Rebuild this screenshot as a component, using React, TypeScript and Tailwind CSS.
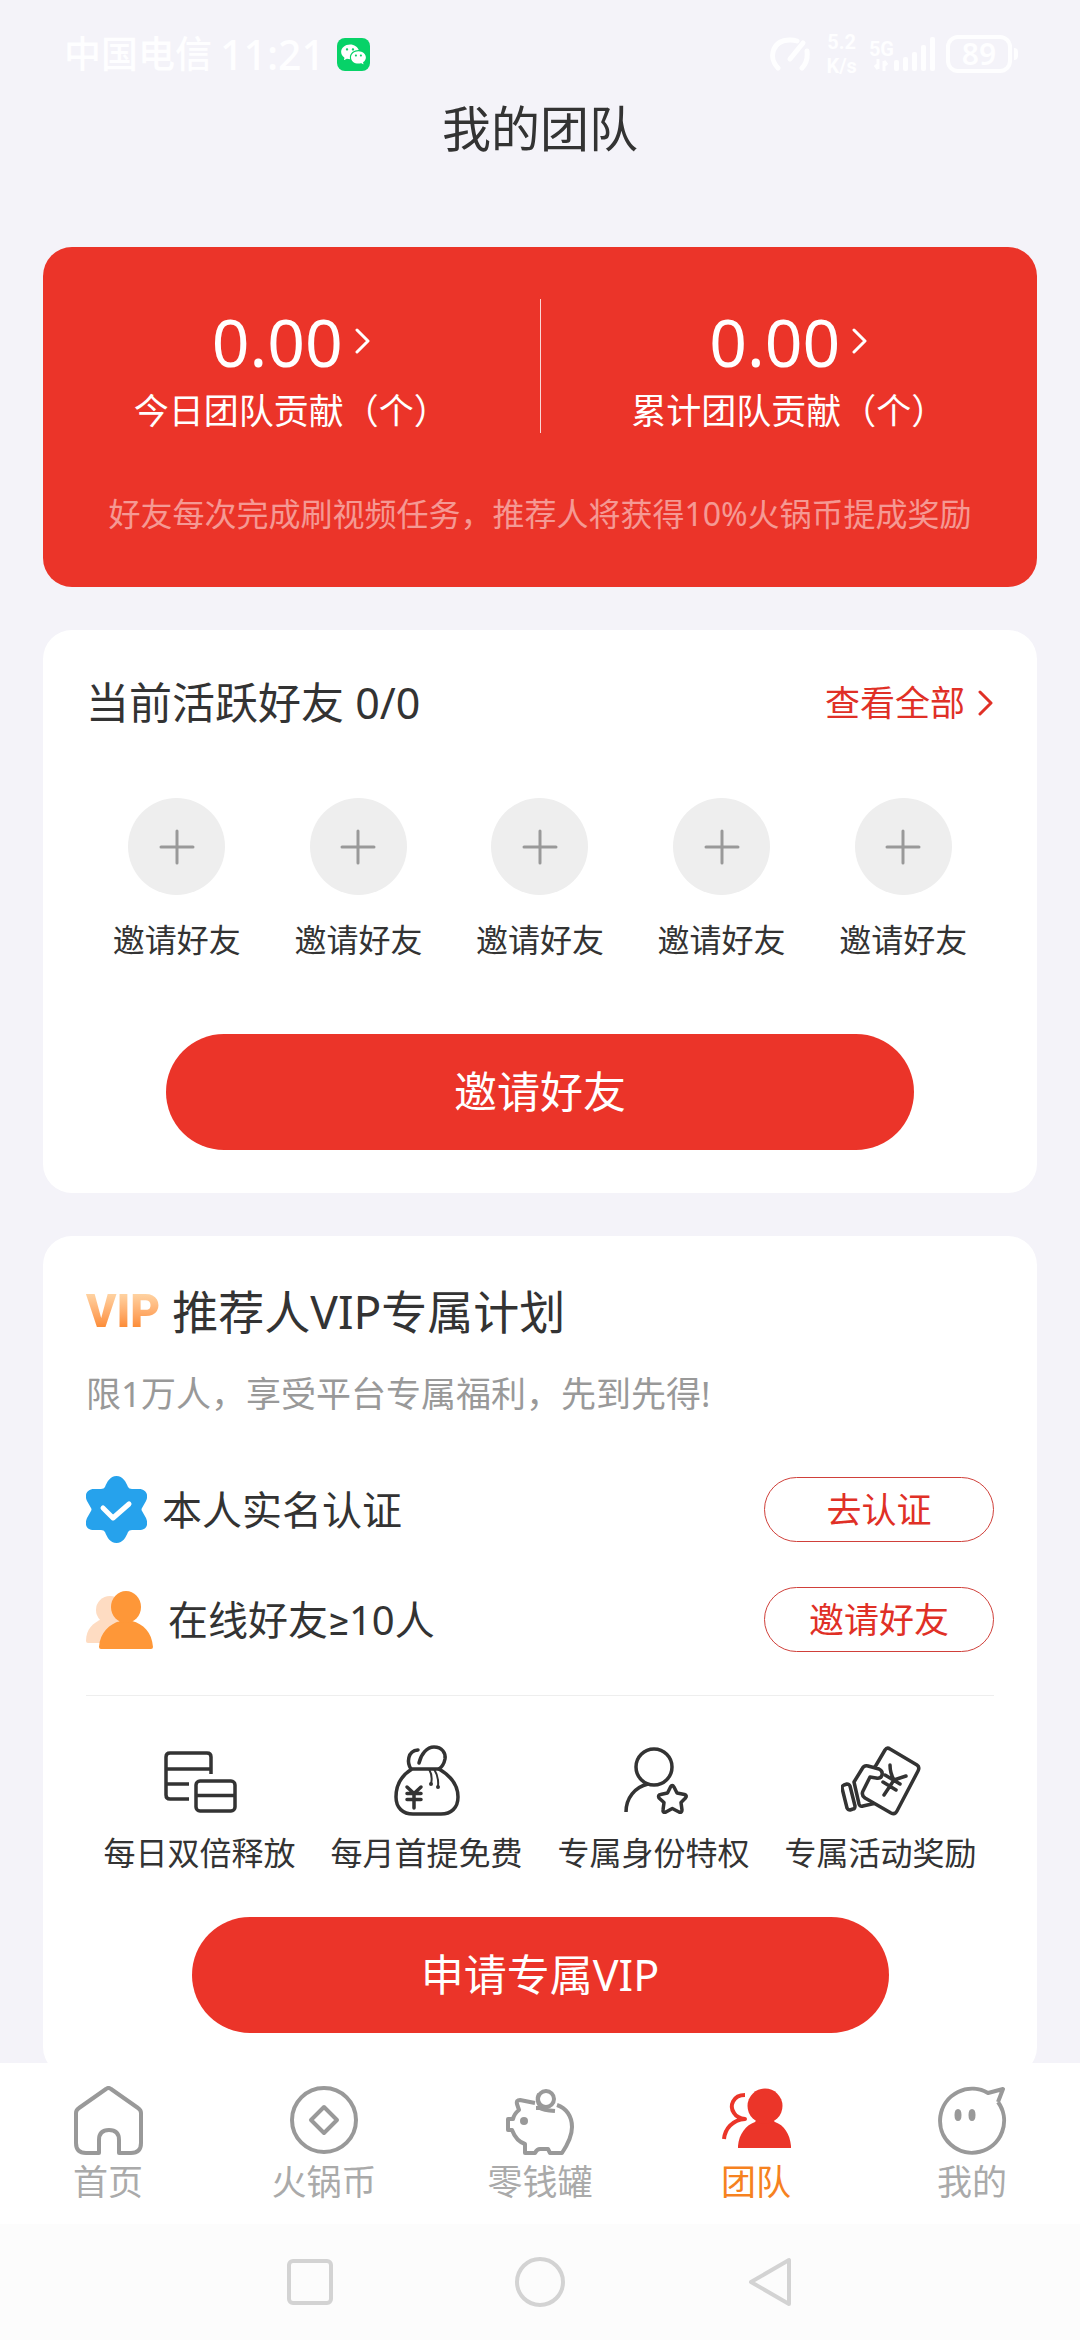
import { ReactNode, useState } from 'react';
import { RiWechatFill } from 'react-icons/ri';

const FONT = "font-['Noto_Sans',Roboto,'Noto_Sans_CJK_SC',sans-serif]";

function Chevron({ className }: { className?: string }) {
    return (
        <svg viewBox="0 0 16 26" className={className} fill="none" stroke="currentColor" strokeWidth="3" strokeLinecap="round" strokeLinejoin="round">
            <path d="M2 2L13 13L2 24" />
        </svg>
    );
}

function StatusBar() {
    return (
        <div className="flex h-[108px] items-center justify-between pr-[62px] pl-16 text-[#fefeff]">
            <div className="flex items-center">
                <span className="text-[37px] leading-[44px] font-medium">中国电信</span>
                <span className="ml-2 text-[41px] leading-[44px] font-medium">11:21</span>
                <span className="ml-3 flex size-[33px] items-center justify-center rounded-lg bg-[#07d268] text-white">
                    <RiWechatFill className="size-[27px]" />
                </span>
            </div>
            <div className="flex items-center">
                <svg viewBox="0 0 40 36" className="h-9 w-10" fill="none" stroke="currentColor" strokeWidth="5" strokeLinecap="round">
                    <path d="M8 32C-2 22 2 4 20 4Q24 4 27 5" />
                    <path d="M37 15C38 23 36 28 32 32" />
                    <path d="M33 7L20 23" />
                </svg>
                <div className="ml-4 flex flex-col text-center font-[Roboto,sans-serif] text-[20px] leading-6 font-bold">
                    <span>5.2</span>
                    <span>K/s</span>
                </div>
                <div className="ml-3 flex items-end">
                    <div className="flex flex-col items-center">
                        <span className="font-[Roboto,sans-serif] text-[20px] leading-5 font-bold">5G</span>
                        <svg viewBox="0 0 14 12" className="h-3 w-3.5" fill="none" stroke="currentColor" strokeWidth="3">
                            <path d="M4 0V10M1 6L4 10M10 12V2M13 6L10 2" />
                        </svg>
                    </div>
                    <svg viewBox="0 0 44 34" className="h-[34px] w-11" fill="currentColor">
                        <rect x="0" y="23" width="5" height="11" rx="2" />
                        <rect x="9" y="20" width="5" height="14" rx="2" />
                        <rect x="18" y="15" width="5" height="19" rx="2" />
                        <rect x="27" y="8" width="5" height="26" rx="2" />
                        <rect x="36" y="0" width="5" height="34" rx="2" />
                    </svg>
                </div>
                <div className="ml-2 flex h-[38px] w-[66px] items-center justify-center rounded-xl border-4 border-current text-[30px] leading-none font-semibold">89</div>
                <div className="ml-0.5 h-3 w-1 rounded-r bg-current" />
            </div>
        </div>
    );
}

function VerifiedIcon() {
    return (
        <svg viewBox="0 0 61 67" className="h-[67px] w-[61px] shrink-0">
            <path
                fill="#26a2ec"
                d="M30.5 0C37 0 40 6 42 11Q43 13 46 13L53 13C60 13 63 19 60 25L56 32Q55 33.500 56 35L60 42C63 49 60 54 53 54L46 54Q43 54 42 56C40 61 37 67 30.500 67C24 67 21 61 19 56Q18 54 15 54L8 54C1 54 -2 49 1 42L5 35Q6 33.500 5 32L1 25C-2 19 1 13 8 13L15 13Q18 13 19 11C21 6 24 0 30.500 0Z"
            />
            <path d="M17 32L27 42L43 28" fill="none" stroke="#fff" strokeWidth="5" strokeLinecap="round" strokeLinejoin="round" />
        </svg>
    );
}

function FriendsIcon() {
    return (
        <svg viewBox="0 0 67 58" className="h-[58px] w-[67px] shrink-0">
            <g fill="#fedcc2">
                <circle cx="24" cy="19" r="14" />
                <path d="M0 50C0 38 7 32 16 28H32V52H2Q0 52 0 50Z" />
            </g>
            <path d="M13 56C14 41 24 33 34 30V26H46V30C57 33 66 41 67 56Q67 58 65 58H15Q13 58 13 56Z" fill="#fe9738" />
            <ellipse cx="40" cy="16" rx="15" ry="16" fill="#fe9738" />
        </svg>
    );
}

const featureSvg = {
    fill: 'none',
    stroke: '#333',
    strokeWidth: 3.5,
    strokeLinecap: 'round',
    strokeLinejoin: 'round',
} as const;

const features: { label: string; icon: ReactNode }[] = [
    {
        label: '每日双倍释放',
        icon: (
            <svg viewBox="0 0 74 72" className="h-[72px] w-[74px]" {...featureSvg} strokeLinecap="butt">
                <path d="M48 29V12Q48 8 44 8H7Q3 8 3 12V50Q3 54 7 54H26M3 24H48M3 39H26" />
                <rect x="33" y="36" width="39" height="30" rx="4" />
                <path d="M33 50.500H72" />
            </svg>
        ),
    },
    {
        label: '每月首提免费',
        icon: (
            <svg viewBox="0 0 74 72" className="h-[72px] w-[74px]" {...featureSvg}>
                <path d="M22 24C12 30 6 40 6 52C6 63 13 69 23 69H51C61 69 68 63 68 52C68 40 61 31 49 24Z" />
                <path d="M28 5C17 6 17 18 21 24M29 18C31 9 37 2 44 2C52 2 56 8 55 14C54 19 52 22 49 24" />
                <path d="M39 24Q43 31 41 39M44 24Q49 32 48 41" strokeWidth="2" />
                <circle cx="41" cy="39" r="1" strokeWidth="2" />
                <circle cx="48" cy="42" r="1" strokeWidth="2" />
                <path d="M17 42L24 48.500L31 42M17 48.500H31M17 54.500H31M24 49V63" />
            </svg>
        ),
    },
    {
        label: '专属身份特权',
        icon: (
            <svg viewBox="0 0 74 72" className="h-[72px] w-[74px]" {...featureSvg}>
                <circle cx="37" cy="22" r="18" />
                <path d="M9 67C9 53 18 42 31 39" strokeLinecap="butt" />
                <path d="M53.500 42Q55.300 39 57 42L60 48L67.500 49.500Q70.500 50.500 68.500 53L64 57.500L65 65Q65 68 62 67L55.300 63.500L49 67Q45.500 68 46 65L47 57.500L42 53Q40.500 50 43.500 49.500L50.500 48Z" />
            </svg>
        ),
    },
    {
        label: '专属活动奖励',
        icon: (
            <svg viewBox="0 0 80 72" className="h-[72px] w-20" {...featureSvg}>
                <path d="M34 22L44 5Q46 2 49 4L76 20Q79 22 77 26L56 66Q54 70 50 68L24 53Q20 50 22 46L29 32L35 33Q40 34 41 30Q42 26 38 24L27 21Q23 20 21 24L13 37L18 59Q19 62 22 61L33 58.500" />
                <path d="M3 40L6 39Q8 39 9 41L14 61Q14 64 12 64L9 65Q7 65 6 63L1 43Q1 41 3 40Z" />
                <path d="M49 20Q49 28 53 35L65 31M53 35L43 50M44 30L59 39M42 37L55 45" />
            </svg>
        ),
    },
];

const tabs: { key: string; label: string; icon: ReactNode }[] = [
    {
        key: 'home',
        label: '首页',
        icon: (
            <path d="M25 67H12Q2 67 2 57V27Q2 24 5 22L32 3Q34.500 1 37 3L64 22Q67 24 67 27V57Q67 67 57 67H45V54Q45 44 35 44Q25 44 25 54Z" />
        ),
    },
    {
        key: 'coin',
        label: '火锅币',
        icon: (
            <>
                <circle cx="34" cy="34" r="32" />
                <path d="M34 21L47 34L34 47L21 34Z" />
            </>
        ),
    },
    {
        key: 'jar',
        label: '零钱罐',
        icon: (
            <>
                <path d="M29 17L14 14Q10 14 11 18L13 24Q8 28 7 33H2V44H6C9 52 13 56 19 58V67H29Q31 63 34 63H42L44 67H56C62 58 66 50 66 41C66 30 60 22 51 19" />
                <path d="M30 22H34Q37 24 49 25M34 20Q30 14 33 8" />
                <circle cx="40" cy="13" r="8" />
                <circle cx="18" cy="35" r="4" fill="#999" stroke="none" />
            </>
        ),
    },
    {
        key: 'team',
        label: '团队',
        icon: (
            <g stroke="#eb3529">
                <path d="M23 9C11 9 7 20 12 27Q15 32 23 33C10 34 3 43 2 53" />
                <path d="M16 60C17 48 24 39 33 36Q35 34 33 32H53Q50 34 53 36C62 39 68 48 69 60V62H16Z" fill="#eb3529" stroke="none" />
                <circle cx="43" cy="20" r="17.500" fill="#eb3529" stroke="none" />
            </g>
        ),
    },
    {
        key: 'me',
        label: '我的',
        icon: (
            <>
                <path d="M60 16L65 3L50 7A32 32 0 1 0 60 16" />
                <ellipse cx="20" cy="29" rx="1.500" ry="4" fill="#999" />
                <ellipse cx="34" cy="29" rx="1.500" ry="4" fill="#999" />
            </>
        ),
    },
];

function Contribution({ value, label }: { value: string; label: string }) {
    return (
        <a href="#contribution" className="flex flex-1 flex-col items-center pt-1">
            <span className="flex h-[76px] items-center gap-3">
                <span className="text-[66px] leading-[76px]">{value}</span>
                <Chevron className="h-[26px] w-4" />
            </span>
            <span className="text-[35px] leading-[64px]">{label}</span>
        </a>
    );
}

function Requirement({ icon, label, action }: { icon: ReactNode; label: string; action: string }) {
    return (
        <li className="flex h-[65px] items-center justify-between">
            <div className="flex items-center gap-[15px]">
                {icon}
                <span className="text-[40px] leading-[56px]">{label}</span>
            </div>
            <button className="h-[65px] w-[230px] rounded-full border border-[#d0403a] text-[35px] leading-[48px] text-[#e03026]">{action}</button>
        </li>
    );
}

export default function App() {
    const [activeTab, setActiveTab] = useState('team');

    return (
        <div className={`flex h-screen flex-col bg-[#f4f3f9] text-[#333] ${FONT}`}>
            <StatusBar />
            <header className="text-center">
                <h1 className="text-[49px] leading-[40px]">我的团队</h1>
            </header>

            <main className="mt-[99px] flex min-h-0 flex-1 flex-col gap-[43px] overflow-y-auto px-[43px] [scrollbar-width:none]">
                {/* Contribution summary */}
                <section className="shrink-0 rounded-[29px] bg-[#eb3429] pt-[52px] pb-[49px] text-white">
                    <div className="flex">
                        <Contribution value="0.00" label="今日团队贡献（个）" />
                        <div className="h-[134px] w-px bg-white/80" />
                        <Contribution value="0.00" label="累计团队贡献（个）" />
                    </div>
                    <p className="mt-[47px] text-center text-[32px] leading-[48px] text-white/50">
                        好友每次完成刷视频任务，推荐人将获得10%火锅币提成奖励
                    </p>
                </section>

                {/* Active friends */}
                <section className="shrink-0 rounded-[29px] bg-white p-[43px]">
                    <div className="flex items-center justify-between">
                        <h2 className="text-[43px] leading-[60px]">当前活跃好友 0/0</h2>
                        <a href="#friends" className="flex items-center gap-[13px] text-[35px] leading-[48px] text-[#e03026]">
                            查看全部
                            <Chevron className="h-[26px] w-4" />
                        </a>
                    </div>
                    <div className="mt-[65px] grid grid-cols-5">
                        {[0, 1, 2, 3, 4].map((slot) => (
                            <button key={slot} className="flex flex-col items-center gap-[21px] text-[32px] leading-[48px]">
                                <span className="flex size-[97px] items-center justify-center rounded-full bg-[#eee]">
                                    <svg viewBox="0 0 36 36" className="size-9" stroke="#999" strokeWidth="3" strokeLinecap="round">
                                        <path d="M18 2V34M2 18H34" />
                                    </svg>
                                </span>
                                邀请好友
                            </button>
                        ))}
                    </div>
                    <button className="mx-auto mt-[70px] block h-[116px] w-[748px] max-w-full rounded-full bg-[#eb3429] text-[43px] leading-[60px] text-white">
                        邀请好友
                    </button>
                </section>

                {/* VIP plan */}
                <section className="shrink-0 rounded-[29px] bg-white p-[43px]">
                    <div className="flex items-center gap-3">
                        <span className="bg-linear-to-b from-[#fed7a8] from-20% to-[#fb8526] to-80% bg-clip-text font-[Roboto,sans-serif] text-[46px] leading-[64px] font-black text-transparent">
                            VIP
                        </span>
                        <h2 className="text-[46px] leading-[64px]">推荐人VIP专属计划</h2>
                    </div>
                    <p className="mt-[27px] text-[35px] leading-[48px] text-[#999]">限1万人，享受平台专属福利，先到先得!</p>

                    <ul className="mt-[59px] flex flex-col gap-[45px]">
                        <Requirement icon={<VerifiedIcon />} label="本人实名认证" action="去认证" />
                        <Requirement icon={<FriendsIcon />} label="在线好友≥10人" action="邀请好友" />
                    </ul>

                    <ul className="mt-[43px] grid grid-cols-4 border-t border-[#eee] pt-[49px]">
                        {features.map((feature) => (
                            <li key={feature.label} className="flex flex-col items-center gap-3 text-[32px] leading-[48px]">
                                {feature.icon}
                                {feature.label}
                            </li>
                        ))}
                    </ul>
                    <button className="mx-auto mt-10 block h-[116px] w-[697px] max-w-full rounded-full bg-[#eb3429] text-[43px] leading-[60px] text-white">
                        申请专属VIP
                    </button>
                </section>
            </main>

            <nav className="grid shrink-0 grid-cols-5 bg-white pt-[23px] pb-[18px]">
                {tabs.map((tab) => (
                    <button
                        key={tab.key}
                        onClick={() => setActiveTab(tab.key)}
                        className={`flex flex-col items-center gap-[3px] text-[35px] leading-[48px] ${activeTab === tab.key ? 'text-[#f6821f]' : 'text-[#aaa]'}`}
                    >
                        <svg viewBox="0 0 69 69" className="size-[69px]" fill="none" stroke="#999" strokeWidth="4" strokeLinejoin="round">
                            {tab.icon}
                        </svg>
                        {tab.label}
                    </button>
                ))}
            </nav>

            {/* System navigation */}
            <div className="flex h-[116px] shrink-0 items-center justify-center bg-[#fcfcfc]">
                <button aria-label="最近任务" className="flex w-[230px] justify-center">
                    <span className="size-[46px] rounded-md border-4 border-[#d3d3d3]" />
                </button>
                <button aria-label="主屏幕" className="flex w-[230px] justify-center">
                    <span className="size-[50px] rounded-full border-4 border-[#d3d3d3]" />
                </button>
                <button aria-label="返回" className="flex w-[230px] justify-center">
                    <svg viewBox="0 0 44 50" className="h-[50px] w-11" fill="none" stroke="#d3d3d3" strokeWidth="4" strokeLinejoin="round">
                        <path d="M41 3V47L3 25Z" />
                    </svg>
                </button>
            </div>
        </div>
    );
}
